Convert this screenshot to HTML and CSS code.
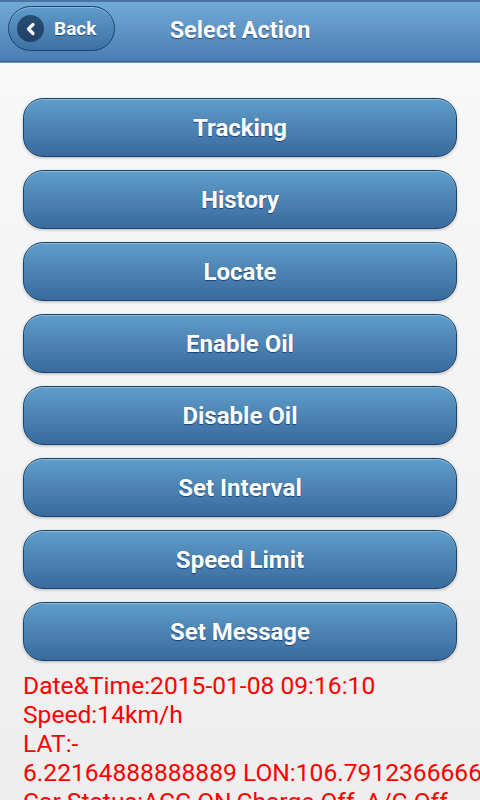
FILE: index.html
```html
<!DOCTYPE html>
<html lang="en">
<head>
    <meta charset="UTF-8">
    <meta name="viewport" content="width=device-width, initial-scale=1.0">
    <title>Select Action</title>
    <link rel="stylesheet" href="styles.css">
</head>
<body>
    <div class="page">
        <div class="header">
            <a class="back-btn" href="#">
                <span class="back-icon">
                    <svg width="14" height="14" viewBox="0 0 14 14">
                        <path d="M9 2.5 L4.5 7 L9 11.5" fill="none" stroke="#fff" stroke-width="3.2" stroke-linecap="round" stroke-linejoin="round"/>
                    </svg>
                </span>
                <span class="back-text">Back</span>
            </a>
            <h1 class="title">Select Action</h1>
        </div>
        <div class="content">
            <a class="action-btn" href="#">Tracking</a>
            <a class="action-btn" href="#">History</a>
            <a class="action-btn" href="#">Locate</a>
            <a class="action-btn" href="#">Enable Oil</a>
            <a class="action-btn" href="#">Disable Oil</a>
            <a class="action-btn" href="#">Set Interval</a>
            <a class="action-btn" href="#">Speed Limit</a>
            <a class="action-btn" href="#">Set Message</a>
            <div class="status">
                Date&amp;Time:2015-01-08 09:16:10<br>
                Speed:14km/h<br>
                LAT:-<wbr>6.22164888888889&nbsp;LON:106.791236666666<br>
                Car Status:ACC ON,Charge Off, A/C Off
            </div>
        </div>
    </div>
</body>
</html>
```

FILE: styles.css
```css
body {
    margin: 0;
    padding: 0;
    font-family: Roboto, "Liberation Sans", sans-serif;
    background: linear-gradient(#f9f9f9, #eeeeee 800px);
    min-height: 100vh;
    overflow: hidden;
}
.page {
    width: 480px;
}
.header {
    position: relative;
    height: 56px;
    padding-bottom: 3px;
    border-top: 2px solid #4a74a2;
    border-bottom: 1px solid #3c6794;
    box-shadow: 0 1px 0 #6395c8;
    background: linear-gradient(#72aad7, #4b7db3);
    display: flex;
    align-items: center;
    justify-content: center;
}
.back-btn {
    position: absolute;
    left: 8px;
    top: 4px;
    width: 105px;
    height: 43px;
    border: 1px solid #18456d;
    border-radius: 23px;
    background: linear-gradient(#5f9ccb, #3e70a4);
    box-shadow: inset 0 1px 0 rgba(255,255,255,0.3);
    display: flex;
    align-items: center;
    text-decoration: none;
}
.back-icon {
    width: 27px;
    height: 27px;
    margin-left: 8px;
    border-radius: 50%;
    background: rgba(0, 20, 50, 0.55);
    display: flex;
    align-items: center;
    justify-content: center;
}
.back-text {
    margin-left: 10px;
    color: #fff;
    font-size: 19px;
    font-weight: bold;
    text-shadow: 0 1px 0 #194b7e;
}
.title {
    margin: 0;
    color: #fff;
    font-size: 23.5px;
    font-weight: bold;
    text-shadow: 0 1px 1px #1f4a75;
}
.content {
    padding: 36px 23px 0 23px;
}
.action-btn {
    display: flex;
    align-items: center;
    justify-content: center;
    height: 57px;
    margin-bottom: 13px;
    border: 1px solid #14466d;
    border-radius: 20px;
    background: linear-gradient(#5f9dca, #3a6a9d);
    box-shadow: inset 0 1px 0 rgba(255,255,255,0.3), 0 1px 3px rgba(0,0,0,0.25);
    color: #fff;
    font-size: 24px;
    font-weight: bold;
    text-decoration: none;
    text-shadow: 0 1px 1px #1a4470;
}
.status {
    margin-top: -3px;
    color: #ff0000;
    font-size: 24.6px;
    line-height: 29px;
    white-space: nowrap;
}
```
